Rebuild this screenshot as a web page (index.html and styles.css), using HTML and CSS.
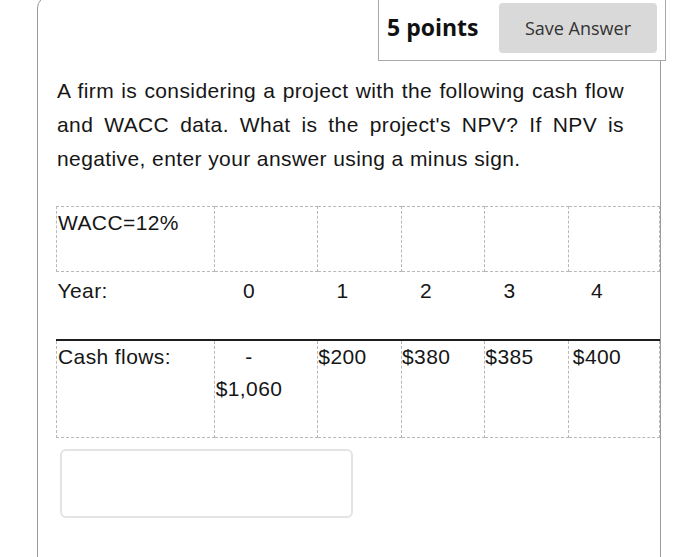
FILE: index.html
```html
<!DOCTYPE html>
<html lang="en">
<head>
<meta charset="utf-8">
<title>Question</title>
<link rel="stylesheet" href="styles.css">
</head>
<body>
<div class="card">
  <div class="head">
    <div class="pts-box">
      <span class="pts">5 points</span>
      <button class="save" type="button">Save Answer</button>
    </div>
  </div>
  <p class="question">A firm is considering a project with the following cash flow and WACC data. What is the project's NPV? If NPV is negative, enter your answer using a minus sign.</p>
  <table class="data">
    <colgroup>
      <col class="c1"><col class="c2"><col class="c3"><col class="c4"><col class="c5"><col class="c6">
    </colgroup>
    <tr class="r-wacc">
      <td class="lbl">WACC=12%</td><td></td><td></td><td></td><td></td><td></td>
    </tr>
    <tr class="r-year">
      <td class="lbl">Year:</td><td>0</td><td>1</td><td>2</td><td>3</td><td>4</td>
    </tr>
    <tr class="r-cash">
      <td class="lbl">Cash flows:</td><td>- $1,060</td><td>$200</td><td>$380</td><td>$385</td><td>$400</td>
    </tr>
  </table>
  <div class="answer"></div>
</div>
</body>
</html>
```
FILE: styles.css
```css
html, body {
  margin: 0;
  padding: 0;
  height: 557px;
  overflow: hidden;
  background: #fff;
}

.card {
  margin: -4px 0 0 37px;
  width: 622px;
  min-height: 640px;
  border: 1px solid #9a9a9a;
  border-radius: 12px;
  box-sizing: content-box;
}

.head {
  display: flex;
  justify-content: flex-end;
  margin-right: -6px;
}

.pts-box {
  display: flex;
  align-items: center;
  width: 270px;
  padding: 6px 8px 7px 8px;
  border: 1px solid #a9a9a9;
  border-top: none;
  background: #fff;
}

.pts {
  font-family: "Open Sans", "Liberation Sans", sans-serif;
  font-weight: 700;
  font-size: 23px;
  color: #111;
  padding-bottom: 3px;
}

.save {
  margin-left: auto;
  width: 158px;
  height: 50px;
  border: none;
  border-radius: 4px;
  background: #d9d9d9;
  font-family: "Open Sans", "Liberation Sans", sans-serif;
  font-size: 18px;
  color: #333;
  padding: 0;
}

.question {
  margin: 13px 36px 0 19px;
  font-family: "Liberation Sans", Arial, sans-serif;
  font-size: 21px;
  letter-spacing: 0.4px;
  line-height: 34px;
  text-align: justify;
  color: #161616;
}

.data {
  margin: 30px 0 0 18px;
  width: 603px;
  table-layout: fixed;
  border-collapse: collapse;
  font-family: "Liberation Sans", Arial, sans-serif;
  font-size: 21px;
  letter-spacing: 0.4px;
  line-height: 32px;
  color: #161616;
}

.c1 { width: 158px; }
.c2 { width: 103px; }
.c3 { width: 84px; }
.c4 { width: 83px; }
.c5 { width: 84px; }
.c6 { width: 91px; }

.data td {
  vertical-align: top;
  text-align: center;
  padding: 0 34px 32px 0;
  border: 1px dashed #b8b8b8;
}

.data td.lbl {
  text-align: left;
  padding-left: 1px;
  padding-right: 4px;
}

.r-year td {
  border-left: none;
  border-right: none;
  padding-top: 3px;
}

.r-cash td {
  border-top: 2px solid #1e1e1e;
}

.answer {
  margin: 11px 0 0 22px;
  width: 289px;
  height: 65px;
  border: 2px solid #e4e4e4;
  border-radius: 6px;
}
```
